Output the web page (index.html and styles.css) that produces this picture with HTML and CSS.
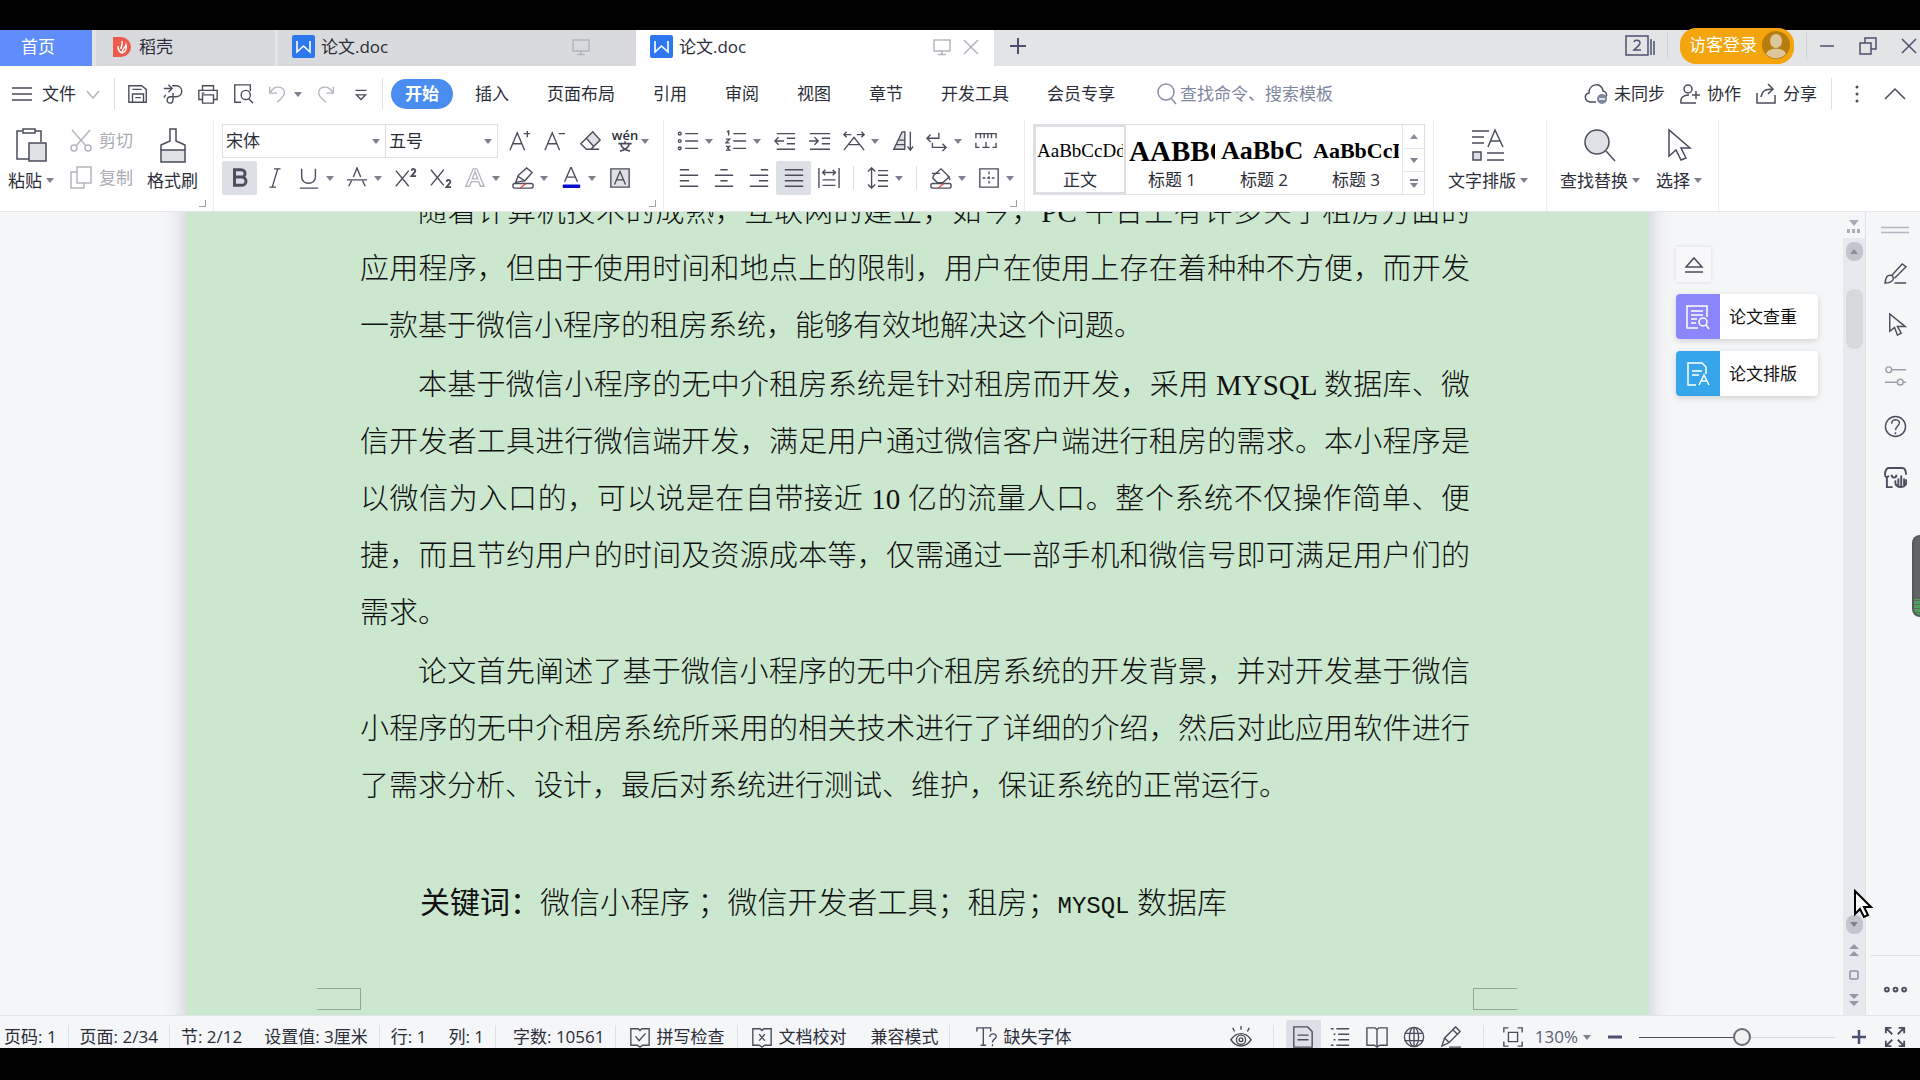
FILE: index.html
```html
<!DOCTYPE html>
<html lang="zh-CN">
<head>
    <meta charset="UTF-8" />
    <meta name="viewport" content="width=device-width, initial-scale=1" />
    <title>论文.doc</title>
    <link rel="stylesheet" href="styles.css">
</head>
<body>

    <header class="tabs">
        <button class="tab tab-home">首页</button>
        <button class="tab tab-store">
            <svg width="18" height="20" viewBox="0 0 18 20"><path d="M0 0h8a10 10 0 0 1 0 20H0z" fill="#ee5b4c"/><path d="M9 4c1 3-1 5-1 8m-3-3c0 4 1 6 4 7 3-1 5-4 4-8-1 3-3 3-4 7" fill="none" stroke="#fff" stroke-width="1.5"/></svg>
            <span>稻壳</span>
        </button>
        <button class="tab tab-doc">
            <svg width="23" height="23" viewBox="0 0 23 23"><rect width="23" height="23" rx="2" fill="#2e78ef"/><path d="M5 6v11l6.500-6 6.500 6V6" fill="none" stroke="#fff" stroke-width="1.600"/></svg>
            <span>论文.doc</span>
            <svg class="line faint push" width="18" height="18" viewBox="0 0 18 18"><path d="M1 2h16v11H1zM9 13v3M5 16.500h8"/></svg>
        </button>
        <div class="tab tab-doc active">
            <svg width="23" height="23" viewBox="0 0 23 23"><rect width="23" height="23" rx="2" fill="#2e78ef"/><path d="M5 6v11l6.500-6 6.500 6V6" fill="none" stroke="#fff" stroke-width="1.600"/></svg>
            <span>论文.doc</span>
            <svg class="line faint push" width="18" height="18" viewBox="0 0 18 18"><path d="M1 2h16v11H1zM9 13v3M5 16.500h8"/></svg>
            <button class="close" aria-label="关闭"><svg class="line faint" width="16" height="16" viewBox="0 0 16 16"><path d="M1 1l14 14M15 1L1 15"/></svg></button>
        </div>
        <button class="new-tab" aria-label="新建"><svg class="line blue" width="18" height="18" viewBox="0 0 18 18"><path d="M9 1v16M1 9h16" stroke-width="2"/></svg></button>
        <div class="window-tools">
            <button aria-label="窗口 2"><svg class="line blue" width="30" height="22" viewBox="0 0 30 22"><path d="M1 1h22v19H1zM26 4v16M29 6v14"/><path d="M9 7c1-3 6-2 6 1 0 2-3 4-6 7h7"/></svg></button>
            <i class="sep"></i>
            <button class="login">访客登录
                <svg width="28" height="28" viewBox="0 0 28 28"><circle cx="14" cy="14" r="14" fill="#b67c0d"/><ellipse cx="14" cy="10" rx="6" ry="7" fill="#dcc49b"/><path d="M4 23c2-7 18-7 20 0a14 14 0 0 1-20 0z" fill="#dcc49b"/></svg>
            </button>
            <i class="sep"></i>
            <button aria-label="最小化"><svg class="line blue" width="16" height="18" viewBox="0 0 16 18"><path d="M1 9h14"/></svg></button>
            <button aria-label="还原"><svg class="line blue" width="18" height="18" viewBox="0 0 18 18"><path d="M1 6h11v11H1zM6 6V1h11v11h-5"/></svg></button>
            <button aria-label="关闭窗口"><svg class="line blue" width="16" height="16" viewBox="0 0 16 16"><path d="M1 1l14 14M15 1L1 15"/></svg></button>
        </div>
    </header>

    <nav class="menu">
        <button class="file">
            <svg class="line" width="20" height="16" viewBox="0 0 20 16"><path d="M0 2h20M0 8h20M0 14h20"/></svg>
            文件
            <svg class="line faint" width="14" height="9" viewBox="0 0 14 9"><path d="M1 1l6 7 6-7"/></svg>
        </button>
        <i class="sep"></i>
        <div class="quick">
            <button class="tool" aria-label="保存"><svg class="line" viewBox="0 0 24 24"><path d="M2 21V3h14l5 4v14zM6 7h10M6 21v-9h12v9M9 16h6"/></svg></button>
            <button class="tool" aria-label="输出为PDF"><svg class="line" viewBox="0 0 24 24"><path d="M2 6h8M7 2l4 4-4 4M11 3h5c8 1 7 12-1 12H9c-4 0-5 7 0 7 4 0 3-6 3-11M4 13l-2 3"/></svg></button>
            <button class="tool" aria-label="打印"><svg class="line" viewBox="0 0 24 24"><path d="M6 8V3h12v5M6 18H2V8h20v10h-4M6 13h12v9H6zM5 11h3"/></svg></button>
            <button class="tool" aria-label="打印预览"><svg class="line" viewBox="0 0 24 24"><path d="M10 21H3V2h17v7M18 17l5 5"/><circle cx="15" cy="13" r="5"/></svg></button>
            <button class="tool drop" aria-label="撤销"><svg class="line faint" viewBox="0 0 24 24"><path d="M4 4v7h8M5 10c4-8 15-7 15 1 0 4-4 7-8 10"/></svg><i class="caret"></i></button>
            <button class="tool" aria-label="恢复"><svg class="line faint" viewBox="0 0 24 24"><path d="M20 4v7h-8M19 10C15 2 4 3 4 11c0 4 4 7 8 10"/></svg></button>
            <button class="tool" aria-label="更多"><svg class="line" viewBox="0 0 24 24"><path d="M6 8h12M7 13h10l-5 5z"/></svg></button>
        </div>
        <i class="sep"></i>
        <div class="menu-tabs">
            <button class="current">开始</button>
            <button>插入</button>
            <button>页面布局</button>
            <button>引用</button>
            <button>审阅</button>
            <button>视图</button>
            <button>章节</button>
            <button>开发工具</button>
            <button>会员专享</button>
        </div>
        <label class="search">
            <svg class="line pale" width="22" height="22" viewBox="0 0 22 22"><circle cx="10" cy="9" r="8"/><path d="M15 15l5 6"/></svg>
            <input type="text" placeholder="查找命令、搜索模板" aria-label="查找命令、搜索模板">
        </label>
        <div class="share">
            <button><svg class="line" width="24" height="22" viewBox="0 0 24 22"><path d="M12 19H6C0 18 0 11 5 10 5 0 18-1 19 8c4 1 4 4 3 6"/><circle cx="18" cy="16" r="5" fill="#7f86a0" stroke="none"/><path d="M15 16h6" stroke="#fff"/></svg>未同步</button>
            <button><svg class="line" width="22" height="22" viewBox="0 0 22 22"><circle cx="9" cy="6" r="4"/><path d="M13 20H2c-1-6 3-8 8-8M17 8v8M13 12h8M12 20h5"/></svg>协作</button>
            <button><svg class="line" width="22" height="22" viewBox="0 0 22 22"><path d="M2 10v10h18v-8M6 14c1-6 4-8 12-8M13 1l5 5-5 5"/></svg>分享</button>
            <i class="sep"></i>
            <button aria-label="更多选项"><svg width="6" height="20" viewBox="0 0 6 20" fill="#4a4d5c"><circle cx="3" cy="3" r="1.500"/><circle cx="3" cy="10" r="1.500"/><circle cx="3" cy="17" r="1.500"/></svg></button>
            <button aria-label="收起功能区"><svg class="line" width="22" height="14" viewBox="0 0 22 14"><path d="M1 12L11 2l10 10"/></svg></button>
        </div>
    </nav>

    <section class="ribbon">
        <div class="group clipboard">
            <button class="big">
                <svg class="line" viewBox="0 0 32 36"><path d="M7 4H2v28h12M20 4h6v11M8 2h12v4H8z"/><path d="M14 16h17v18H14z" fill="#dfe1e5"/></svg>
                <span>粘贴<i class="caret"></i></span>
            </button>
            <div class="rows">
                <button class="small"><svg class="line faint" viewBox="0 0 24 24"><path d="M3 1l14 16M21 1L7 17"/><circle cx="5" cy="19" r="3"/><circle cx="19" cy="19" r="3"/></svg>剪切</button>
                <button class="small"><svg class="line faint" viewBox="0 0 24 24"><path d="M8 1h14v16H8zM8 6H2v16h13v-5"/></svg>复制</button>
            </div>
            <button class="big">
                <svg class="line" viewBox="0 0 32 36"><path d="M4 23h24v12H4z" fill="#dfe1e5"/><path d="M4 23v-5l9-4V2h6v12l9 4v5"/></svg>
                <span>格式刷</span>
            </button>
            <i class="corner"></i>
        </div>

        <div class="group font">
            <div class="row">
                <div class="selects">
                    <div class="select-box font-name"><select aria-label="字体"><option>宋体</option></select><i class="caret"></i></div>
                    <div class="select-box font-size"><select aria-label="字号"><option>五号</option></select><i class="caret"></i></div>
                </div>
                <button class="tool" aria-label="增大字号"><svg class="line" viewBox="0 0 24 24"><path d="M1 22L9 3l8 19M4 15h10M20 1v7M16 4h7"/></svg></button>
                <button class="tool" aria-label="减小字号"><svg class="line" viewBox="0 0 24 24"><path d="M1 22L9 3l8 19M4 15h10M16 4h7"/></svg></button>
                <button class="tool" aria-label="清除格式"><svg class="line" viewBox="0 0 24 24"><path d="M8 9l7-7 8 9-7 7z" fill="#dfe1e5"/><path d="M8 9l-6 6 6 6h5l3-3M8 21h14"/></svg></button>
                <button class="tool drop phonetic" aria-label="拼音指南"><span class="pinyin">wén</span><svg class="line thick" viewBox="0 0 24 14"><path d="M12 0v3M4 3h16M7 4c2 6 7 7 11 8M17 4c-2 6-7 7-11 8"/></svg><i class="caret"></i></button>
            </div>
            <div class="row">
                <button class="tool on" aria-label="加粗"><svg class="line" viewBox="0 0 24 24"><path d="M6 3h7c6 0 6 8 0 8H6zM6 11h8c6 0 6 9 0 9H6z" stroke-width="3.200"/></svg></button>
                <button class="tool" aria-label="倾斜"><svg class="line" viewBox="0 0 24 24"><path d="M11 2h7M6 22h7M15 2L9 22"/></svg></button>
                <button class="tool drop" aria-label="下划线"><svg class="line" viewBox="0 0 24 24"><path d="M4 2v9c0 9 15 9 15 0V2M2 23h20"/></svg><i class="caret"></i></button>
                <button class="tool drop" aria-label="删除线"><svg class="line" viewBox="0 0 24 24"><path d="M3 21l3-6M8 11l4-10 4 10M18 15l3 6M1 14h22"/></svg><i class="caret"></i></button>
                <button class="tool" aria-label="上标"><svg class="line" viewBox="0 0 24 24"><path d="M1 4l14 17M15 4L1 21"/><path d="M18 4c1-3 5-2 4 1l-4 5h5" stroke-width="2"/></svg></button>
                <button class="tool" aria-label="下标"><svg class="line" viewBox="0 0 24 24"><path d="M1 3l14 17M15 3L1 20"/><path d="M18 16c1-3 5-2 4 1l-4 5h5" stroke-width="2"/></svg></button>
                <button class="tool drop" aria-label="文字效果"><svg class="line faint" viewBox="0 0 24 24"><path d="M2 21L10 2h4l8 19h-4l-2-5H8l-2 5zM9 13h6l-3-8z"/></svg><i class="caret"></i></button>
                <button class="tool drop" aria-label="突出显示"><svg class="line" viewBox="0 0 24 24"><path d="M7 9l9-8 6 5-8 9-6 1-4 1z"/><path d="M6 10l8 5" /><rect x="1" y="18" width="22" height="5" rx="2"/><path d="M9 23l6-5" stroke="#e04848"/></svg><i class="caret"></i></button>
                <button class="tool drop" aria-label="字体颜色"><svg class="line" viewBox="0 0 24 24"><path d="M5 16l7-16 7 16M8 11h8"/><rect x="3" y="19" width="19" height="4" rx="1" fill="#0a0acb" stroke="none"/></svg><i class="caret"></i></button>
                <button class="tool" aria-label="字符底纹"><svg class="line" viewBox="0 0 24 24"><path d="M2 2h20v20H2z" fill="#dfe1e5"/><path d="M6 19l6-14 6 14M8 14h8"/></svg></button>
            </div>
            <i class="corner"></i>
        </div>

        <div class="group para">
            <div class="row">
                <button class="tool drop" aria-label="项目符号"><svg class="line" viewBox="0 0 24 24"><circle cx="3" cy="4" r="1.500"/><circle cx="3" cy="12" r="1.500"/><circle cx="3" cy="20" r="1.500"/><path d="M9 4h14M9 12h14M9 20h14"/></svg><i class="caret"></i></button>
                <button class="tool drop" aria-label="编号"><svg class="line" viewBox="0 0 24 24"><path d="M2 2l2-1v5M1 10h4l-4 4h4M1 18h4l-2 2 2 2H1M9 4h14M9 12h14M9 20h14"/></svg><i class="caret"></i></button>
                <button class="tool" aria-label="减少缩进"><svg class="line" viewBox="0 0 24 24"><path d="M3 4h20M14 9h9M14 15h9M3 21h20M1 12h10M5 8l-4 4 4 4"/></svg></button>
                <button class="tool" aria-label="增加缩进"><svg class="line" viewBox="0 0 24 24"><path d="M1 4h22M14 9h9M14 15h9M1 21h22M0 12h10M6 8l4 4-4 4"/></svg></button>
                <button class="tool drop" aria-label="中文版式"><svg class="line" viewBox="0 0 24 24"><path d="M1 22L12 8l11 14M6 16h12M1 5h8M4 2L1 5l3 3M15 5h8M20 2l3 3-3 3"/></svg><i class="caret"></i></button>
                <button class="tool" aria-label="排序"><svg class="line" viewBox="0 0 24 24"><path d="M2 21l9-19h3v19zM7 11h7M5 16h9" fill="#dfe1e5"/><path d="M20 2v20M17 18l3 4 3-4"/></svg></button>
                <button class="tool drop" aria-label="显示编辑标记"><svg class="line" viewBox="0 0 24 24"><path d="M14 3v6H1M5 5L1 9l4 4M7 14v5h15M18 15l4 4-4 4"/></svg><i class="caret"></i></button>
                <button class="tool" aria-label="制表位"><svg class="line" viewBox="0 0 24 24"><path d="M1 9V4h22v5M6 4v5M10 4v5M14 4v5M18 4v5M1 14v5h4M23 14v5h-4M12 13v6M8 19h8"/></svg></button>
            </div>
            <div class="row">
                <button class="tool" aria-label="左对齐"><svg class="line" viewBox="0 0 24 24"><path d="M2 3h10M2 9h20M2 15h10M2 21h20"/></svg></button>
                <button class="tool" aria-label="居中"><svg class="line" viewBox="0 0 24 24"><path d="M8 3h8M2 9h20M8 15h8M2 21h20"/></svg></button>
                <button class="tool" aria-label="右对齐"><svg class="line" viewBox="0 0 24 24"><path d="M14 3h8M2 9h20M12 15h10M2 21h20"/></svg></button>
                <button class="tool on" aria-label="两端对齐"><svg class="line" viewBox="0 0 24 24"><path d="M2 3h20M2 9h20M2 15h20M2 21h20"/></svg></button>
                <button class="tool" aria-label="分散对齐"><svg class="line" viewBox="0 0 24 24"><path d="M1 1v22M23 1v22M5 6h14M8 3L5 6l3 3M16 3l3 3-3 3M5 14h14M5 20h14"/></svg></button>
                <i class="sep"></i>
                <button class="tool drop" aria-label="行距"><svg class="line" viewBox="0 0 24 24"><path d="M5 1v22M1 5l4-4 4 4M1 19l4 4 4-4M12 4h11M12 9h11M12 15h11M12 21h11"/></svg><i class="caret"></i></button>
                <i class="sep"></i>
                <button class="tool drop" aria-label="底纹颜色"><svg class="line" viewBox="0 0 24 24"><path d="M4 9l8-7 9 9-7 6H8l-5-5zM2 7h9M19 9l3 5" fill="none"/><rect x="1" y="18" width="22" height="5" rx="2"/><path d="M9 23l6-5" stroke="#e04848"/></svg><i class="caret"></i></button>
                <button class="tool drop" aria-label="边框"><svg class="line" viewBox="0 0 24 24"><path d="M2 2h20v20H2z"/><path d="M12 5v14M5 12h14" stroke-dasharray="3 2"/></svg><i class="caret"></i></button>
            </div>
            <i class="corner"></i>
        </div>

        <div class="group styles">
            <div class="gallery">
                <button class="style picked"><b class="normal">AaBbCcDd</b><span>正文</span></button>
                <button class="style"><b class="h1">AABBC</b><span>标题 1</span></button>
                <button class="style"><b class="h2">AaBbC</b><span>标题 2</span></button>
                <button class="style"><b class="h3">AaBbCcD</b><span>标题 3</span></button>
                <div class="gallery-nav">
                    <button aria-label="上一行"><i class="caret up"></i></button>
                    <button aria-label="下一行"><i class="caret"></i></button>
                    <button aria-label="展开样式"><i class="bar"></i><i class="caret"></i></button>
                </div>
            </div>
        </div>

        <div class="group typeset">
            <button class="big">
                <svg class="line" viewBox="0 0 32 36"><path d="M0 4h17M0 10h12M0 16h12M16 20l7-17 8 17M18 14h10M15 26h17M15 33h17"/><path d="M1 25h8v8H1z" fill="#dfe1e5"/></svg>
                <span>文字排版<i class="caret"></i></span>
            </button>
        </div>

        <div class="group find">
            <button class="big">
                <svg class="line" viewBox="0 0 32 36"><circle cx="13" cy="15" r="12" fill="#dfe1e5"/><path d="M22 24l9 10"/></svg>
                <span>查找替换<i class="caret"></i></span>
            </button>
            <button class="big">
                <svg class="line" viewBox="0 0 32 36"><path d="M6 3v26l7-6 5 10 5-2-5-10h9z"/></svg>
                <span>选择<i class="caret"></i></span>
            </button>
        </div>
    </section>

    <main class="work">
        <div class="canvas">
            <article class="page">
                <p>随着计算机技术的成熟，互联网的建立，如今，PC 平台上有许多关于租房方面的应用程序，但由于使用时间和地点上的限制，用户在使用上存在着种种不方便，而开发一款基于微信小程序的租房系统，能够有效地解决这个问题。</p>
                <p>本基于微信小程序的无中介租房系统是针对租房而开发，采用 MYSQL 数据库、微信开发者工具进行微信端开发，满足用户通过微信客户端进行租房的需求。本小程序是以微信为入口的，可以说是在自带接近 10 亿的流量人口。整个系统不仅操作简单、便捷，而且节约用户的时间及资源成本等，仅需通过一部手机和微信号即可满足用户们的需求。</p>
                <p>论文首先阐述了基于微信小程序的无中介租房系统的开发背景，并对开发基于微信小程序的无中介租房系统所采用的相关技术进行了详细的介绍，然后对此应用软件进行了需求分析、设计，最后对系统进行测试、维护，保证系统的正常运行。</p>
                <p class="keywords"><strong>关键词：</strong>微信小程序 ；微信开发者工具；租房；<code>MYSQL</code> 数据库</p>
                <div class="crops"><i></i><i></i></div>
            </article>

            <aside class="helpers">
                <button class="eject" aria-label="收起"><svg class="line" width="20" height="18" viewBox="0 0 20 18"><path d="M2 11l8-9 8 9zM1 16h18"/></svg></button>
                <button class="helper check">
                    <span class="badge"><svg class="line white" width="26" height="26" viewBox="0 0 26 26"><path d="M13 24H2V2h20v11M6 7h12M6 11h12M6 15h6M6 19h5M21 21l3 4"/><circle cx="18" cy="18" r="4"/></svg></span>
                    论文查重
                </button>
                <button class="helper layout">
                    <span class="badge"><svg class="line white" width="26" height="26" viewBox="0 0 26 26"><path d="M11 24H3V2h14l4 4v7M7 10h10M7 14h7M14 24l5-10 5 10M16 20h6"/></svg></span>
                    论文排版
                </button>
            </aside>
        </div>

        <div class="scroll">
            <svg class="ruler" width="16" height="14" viewBox="0 0 16 14" fill="#a9adb8"><path d="M3 0h10L8 6zM1 9h3v4H1zM6 9h3v4H6zM11 9h3v4h-3z"/></svg>
            <button class="arrow" aria-label="向上滚动"><i class="caret up"></i></button>
            <i class="thumb"></i>
            <div class="scroll-end">
                <button class="arrow" aria-label="向下滚动"><i class="caret"></i></button>
                <button aria-label="上一页"><svg width="12" height="14" viewBox="0 0 12 14" fill="#9498a6"><path d="M6 1l5 5H1zM6 8l5 5H1z"/></svg></button>
                <button aria-label="选择浏览对象"><svg class="line pale" width="12" height="12" viewBox="0 0 12 12"><rect x="2" y="2" width="8" height="8" rx="1"/></svg></button>
                <button aria-label="下一页"><svg width="12" height="14" viewBox="0 0 12 14" fill="#9498a6"><path d="M6 6l5-5H1zM6 13l5-5H1z"/></svg></button>
            </div>
        </div>

        <aside class="side">
            <svg class="line faint grip" width="30" height="8" viewBox="0 0 30 8"><path d="M1 1.500h28M1 6.500h28"/></svg>
            <button aria-label="样式"><svg class="line" viewBox="0 0 24 24"><path d="M1 22c1-6 2-9 7-8 4 3 1 8-7 8zM8 14L19 2l4 3-12 12M11 22h12"/></svg></button>
            <button aria-label="选择"><svg class="line" viewBox="0 0 24 24"><path d="M6 1v18l5-4 3 8 4-2-4-7h8z"/></svg></button>
            <button aria-label="属性"><svg class="line faint dim" viewBox="0 0 24 24"><circle cx="5" cy="6" r="3"/><path d="M8 6h15M1 19h13M20 19h3"/><circle cx="17" cy="19" r="3"/></svg></button>
            <button aria-label="帮助"><svg class="line" viewBox="0 0 24 24"><circle cx="12" cy="12" r="10.500"/><path d="M8 9c0-6 9-5 8 0-1 3-4 3-4 7M12 18v2"/></svg></button>
            <button aria-label="稻壳资源"><svg class="line thick" viewBox="0 0 24 24"><path d="M3 11v11h6M1 10c0-5 1-8 4-8h14c3 0 4 3 4 7M1 10c1 2 3 2 4 0M8 9c0 4 5 4 5 0"/><path d="M18 10v12M15 13v8M12 15c-1 5 2 7 6 7s6-3 5-8M21 13v8"/></svg></button>
            <button class="more" aria-label="更多"><svg class="line thick" viewBox="0 0 24 24"><circle cx="3" cy="12" r="2"/><circle cx="12" cy="12" r="2"/><circle cx="21" cy="12" r="2"/></svg></button>
        </aside>

        <div class="meter"></div>
        <svg class="pointer" width="20" height="30" viewBox="0 0 20 30"><path d="M2 2v23l5-5 4 8 4-2-4-8h7z" fill="#fff" stroke="#000" stroke-width="2"/></svg>
    </main>

    <footer class="status">
        <span>页码: 1</span>
        <i class="sep"></i>
        <span>页面: 2/34</span>
        <i class="sep"></i>
        <span class="pair"><span>节: 2/12</span><span>设置值: 3厘米</span></span>
        <i class="sep"></i>
        <span class="pair"><span>行: 1</span><span>列: 1</span></span>
        <i class="sep"></i>
        <span class="count">字数: 10561</span>
        <i class="sep"></i>
        <button><svg class="line" viewBox="0 0 24 24"><path d="M10 3H2v18h7l3 2 3-2h7V3h-8l-2 2zM7 11l4 5 7-8"/></svg>拼写检查</button>
        <i class="sep"></i>
        <span class="pair"><button><svg class="line" viewBox="0 0 24 24"><path d="M10 3H2v18h7l3 2 3-2h7V3h-8l-2 2zM9 9l6 7M15 9l-6 7"/></svg>文档校对</button><span>兼容模式</span></span>
        <i class="sep"></i>
        <button class="missing"><svg class="line" viewBox="0 0 24 24"><path d="M1 6V2h15v4M8 2v19M5 21h6M15 12c0-5 8-4 7 0-1 3-4 2-4 6M18 20v2"/></svg>缺失字体</button>

        <div class="views">
            <button class="tool" aria-label="护眼模式"><svg class="line" viewBox="0 0 24 24"><path d="M1 15c6-9 16-9 22 0-6 9-16 9-22 0zM12 0v4M3 2l2 4M21 2l-2 4"/><circle cx="12" cy="15" r="5"/><circle cx="12" cy="15" r="2"/></svg></button>
            <i class="sep"></i>
            <button class="tool on" aria-label="页面视图"><svg class="line" viewBox="0 0 24 24"><path d="M2 1h15l5 5v17H2zM6 10h12M6 15h12"/></svg></button>
            <button class="tool" aria-label="大纲"><svg class="line" viewBox="0 0 24 24"><path d="M2 3h3M8 3h14M5 9h2M10 9h12M5 15h2M10 15h12M2 21h3M8 21h14"/></svg></button>
            <button class="tool" aria-label="阅读版式"><svg class="line" viewBox="0 0 24 24"><path d="M12 4L10 2H1v19h8l3 2 3-2h8V2h-9zM12 4v19"/></svg></button>
            <button class="tool" aria-label="Web版式"><svg class="line" viewBox="0 0 24 24"><circle cx="12" cy="12" r="10.500"/><ellipse cx="12" cy="12" rx="5" ry="10.500"/><path d="M12 1v22M2 8h20M2 16h20"/></svg></button>
            <button class="tool" aria-label="写作模式"><svg class="line" viewBox="0 0 24 24"><path d="M2 22l3-9L17 1l5 5L10 18zM5 13l5 5M14 4l5 5M10 23h13"/></svg></button>
            <i class="sep"></i>
            <button class="tool" aria-label="适合页面"><svg class="line" viewBox="0 0 24 24"><path d="M7 2H2v5M17 2h5v5M7 22H2v-5M17 22h5v-5M7 7h10v10H7z"/></svg></button>
            <button class="percent">130%<i class="caret"></i></button>
            <button class="step" aria-label="缩小"><svg class="line blue" viewBox="0 0 16 16"><path d="M1 8h14" stroke-width="3"/></svg></button>
            <input class="zoom" type="range" min="0" max="100" value="53" aria-label="缩放">
            <button class="step" aria-label="放大"><svg class="line blue" viewBox="0 0 16 16"><path d="M1 8h14M8 1v14" stroke-width="2.500"/></svg></button>
            <button class="full" aria-label="全屏"><svg class="line thick" viewBox="0 0 24 24"><path d="M2 8V2h6M2 2l7 7M22 8V2h-6M22 2l-7 7M2 16v6h6M2 22l7-7M22 16v6h-6M22 22l-7-7"/></svg></button>
        </div>
    </footer>

</body>
</html>
```

FILE: styles.css
```css
* {
    box-sizing: border-box;
}

body {
    margin: 0;
    height: 100vh;
    padding: 30px 0 32px;
    display: flex;
    flex-direction: column;
    overflow: hidden;
    background-color: #000;
    color: #2b2d38;
    font-family: "Open Sans", "Noto Sans CJK SC", sans-serif;
    font-size: 17px;
    line-height: 24px;
}

button,
input,
select {
    font: inherit;
    color: inherit;
    margin: 0;
    padding: 0;
    border: none;
    background: none;
}

button {
    display: flex;
    align-items: center;
    white-space: nowrap;
}

svg {
    display: block;
    flex: none;
}

.line {
    fill: none;
    stroke: #4a4d5c;
    stroke-width: 1.5;
}

.line.thick { stroke-width: 2; }
.line.faint { stroke: #b4b6bf; }
.line.faint.dim { stroke: #9b9fa9; }
.line.pale { stroke: #8b90a5; }
.line.blue { stroke: #4b5070; }
.line.white { stroke: #fff; }

.sep {
    flex: none;
    width: 1px;
    background-color: #dfe0e4;
}

.caret {
    flex: none;
    display: inline-block;
    border: 4px solid transparent;
    border-top: 5px solid #7d818f;
    border-bottom: none;
}

.caret.up {
    border-top: none;
    border-bottom: 5px solid #8b8f9c;
}

/* tabs */
.tabs {
    flex: none;
    height: 36px;
    display: flex;
    background-color: #e3e4e6;
}

.tab {
    flex: none;
    display: flex;
    align-items: center;
    padding-bottom: 3px;
    background-color: #d9dadd;
}

.tab-home {
    width: 92px;
    margin-right: 4px;
    padding-left: 21px;
    background-color: #5f8dfb;
    color: #fff;
}

.tab-store {
    width: 179px;
    padding-left: 17px;
    gap: 8px;
    margin-right: 3px;
}

.tab-doc {
    width: 358px;
    padding-left: 14px;
    padding-right: 46px;
    gap: 6px;
}

.tab-doc.active {
    padding-right: 15px;
    background-color: #fff;
}

.push {
    margin-left: auto;
}

.close {
    margin-left: 6px;
}

.new-tab {
    padding: 0 15px 4px;
}

.window-tools {
    margin-left: auto;
    display: flex;
    align-items: center;
    gap: 12px;
    padding: 0 3px 4px 0;
}

.window-tools .sep {
    height: 26px;
    background-color: #cfd0d4;
}

.window-tools button + button {
    margin-left: 12px;
}

.window-tools .login {
    height: 36px;
    padding: 0 4px 2px 9px;
    gap: 5px;
    border-radius: 16px;
    background-color: #f4a50d;
    color: #fff;
}

/* menu */
.menu {
    flex: none;
    height: 54px;
    display: flex;
    align-items: center;
    padding: 2px 14px 0 12px;
    background-color: #fff;
}

.menu .sep {
    height: 32px;
}

.file {
    gap: 10px;
    margin-right: 14px;
}

.quick {
    display: flex;
    padding: 0 4px 0 5px;
}

.tool {
    flex: none;
    width: 35px;
    height: 34px;
    padding: 0 5px;
    justify-content: center;
}

.tool svg {
    width: 22px;
    height: 22px;
}

.tool.drop {
    width: 48px;
    padding: 0 6px;
    gap: 6px;
    justify-content: flex-start;
}

.tool.on {
    background-color: #dcdfe5;
    border-radius: 2px;
}

.menu-tabs {
    display: flex;
    align-items: center;
    gap: 38px;
    padding-left: 8px;
}

.menu-tabs .current {
    height: 30px;
    padding: 0 14px;
    margin-right: -16px;
    border-radius: 15px;
    background-color: #4a8df0;
    color: #fff;
    font-weight: bold;
}

.search {
    flex: 1;
    display: flex;
    align-items: center;
    gap: 2px;
    margin-left: 41px;
}

.search input {
    width: 220px;
    outline: none;
}

.search input::placeholder {
    color: #7f86a0;
    opacity: 1;
}

.share {
    display: flex;
    align-items: center;
    gap: 14px;
}

.share button {
    gap: 6px;
}

.share .sep + button {
    margin: 0 10px 0 8px;
}

/* ribbon */
.ribbon {
    flex: none;
    height: 92px;
    display: flex;
    background-color: #fff;
    border-bottom: 1px solid #e4e6e9;
}

.group {
    position: relative;
    flex: none;
    padding-top: 4px;
    border-right: 1px solid #ebecef;
}

.corner {
    position: absolute;
    right: 7px;
    bottom: 4px;
    width: 7px;
    height: 7px;
    border: solid #9da1ac;
    border-width: 0 1px 1px 0;
}

.clipboard {
    display: flex;
    padding-left: 3px;
    width: 214px;
}

.rows {
    display: flex;
    flex-direction: column;
    gap: 3px;
    margin: 0 9px 0 10px;
}

.small {
    height: 34px;
    gap: 6px;
    color: #a9abb5;
}

.small svg {
    width: 24px;
    height: 24px;
}

.big {
    flex-direction: column;
    height: 72px;
    padding: 3px 5px 0;
}

.big svg {
    width: 32px;
    height: 36px;
    margin-bottom: 6px;
}

.big .caret {
    margin: 0 0 4px 4px;
}

.row {
    display: flex;
    margin-bottom: 3px;
}

.font {
    padding-left: 8px;
    width: 450px;
}

.para {
    width: 361px;
    padding-left: 7px;
}

.selects {
    display: flex;
    width: 276px;
    height: 34px;
    margin-right: 4px;
    border: 1px solid #dddfe3;
}

.select-box {
    display: flex;
    align-items: center;
    padding-right: 5px;
}

.select-box select {
    appearance: none;
    flex: 1;
    height: 100%;
    padding-left: 3px;
}

.font-name {
    width: 163px;
    border-right: 1px solid #dddfe3;
}

.font-size {
    flex: 1;
}

/* letters over a small glyph, caret beside both */
.tool.phonetic {
    display: grid;
    grid-template-columns: 24px 8px;
    gap: 0 4px;
    align-content: center;
    justify-items: center;
}

.pinyin {
    font-size: 13px;
    line-height: 12px;
    font-weight: 600;
}

.phonetic svg {
    width: 20px;
    height: 12px;
    grid-row: 2;
}

.phonetic .caret {
    grid-area: 1 / 2 / 3 / 3;
    align-self: center;
}

.row .sep {
    height: 24px;
    margin: 5px 7px;
}

.styles {
    padding: 4px 8px;
}

.gallery {
    display: flex;
    height: 71px;
    border: 1px solid #dddfe3;
}

.style {
    width: 92px;
    flex-direction: column;
    align-items: stretch;
    justify-content: flex-end;
    padding: 0 1px;
    border: 2px solid transparent;
}

.style.picked {
    border-color: #dddfe5;
}

.style b {
    overflow: hidden;
    font-family: "Liberation Serif", serif;
    line-height: 34px;
    color: #000;
    text-align: left;
}

.style .normal { font-size: 19px; font-weight: normal; }
.style .h1 { font-size: 29px; }
.style .h2 { font-size: 26px; }
.style .h3 { font-size: 22px; }

.gallery-nav {
    width: 22px;
    display: grid;
    grid-template-rows: 1fr 1fr 1fr;
    border-left: 1px solid #e4e6e9;
}

.gallery-nav button {
    flex-direction: column;
    justify-content: center;
    gap: 2px;
}

.gallery-nav button + button {
    border-top: 1px solid #e4e6e9;
}

.bar {
    width: 8px;
    height: 2px;
    background-color: #7d818f;
}

.typeset {
    padding-left: 9px;
    padding-right: 13px;
}

.find {
    display: flex;
    gap: 6px;
    padding-left: 8px;
    padding-right: 11px;
}

/* document */
.work {
    flex: 1;
    min-height: 0;
    position: relative;
    display: flex;
    background-color: #f5f6f8;
}

.canvas {
    flex: 1;
    position: relative;
    overflow: hidden;
    padding: 0 194px 0 186px;
    border-bottom: 1px solid #e2e4e7;
}

.page {
    margin-top: -28px;
    min-height: 900px;
    padding: 0 179px 0 174px;
    background-color: #cbe8cf;
    box-shadow: 0 0 20px rgba(60, 60, 80, 0.25);
    color: #111;
    font-family: "Liberation Serif", "Noto Sans CJK SC", serif;
    font-size: 29px;
    font-weight: 300;
    line-height: 57px;
}

.page p {
    margin: 0 0 2px;
    text-indent: 2em;
    text-align: justify;
}

.page .keywords {
    margin-top: 59px;
    font-size: 30px;
}

.page code {
    font-family: "Liberation Mono", monospace;
    font-size: 24px;
}

.crops {
    display: flex;
    justify-content: space-between;
    margin: 53px -47px 0 -43px;
}

.crops i {
    width: 44px;
    height: 22px;
    border: solid #8fa893;
    border-width: 1px 1px 1px 0;
}

.crops i + i {
    border-width: 1px 0 1px 1px;
}

.helpers {
    position: absolute;
    top: 35px;
    right: 25px;
    width: 142px;
    display: grid;
    gap: 12px;
}

.eject {
    width: 35px;
    height: 35px;
    justify-content: center;
    background-color: #f8f8fa;
    box-shadow: 0 0 4px rgba(0, 0, 0, 0.12);
}

.helper {
    height: 45px;
    gap: 9px;
    overflow: hidden;
    border-radius: 4px;
    background-color: #fff;
    box-shadow: 0 2px 6px rgba(0, 0, 0, 0.15);
    color: #111;
}

.badge {
    width: 44px;
    height: 100%;
    display: grid;
    place-items: center;
}

.check .badge { background-color: #8c86fb; }
.layout .badge { background-color: #36a5ea; }

.scroll {
    width: 23px;
    display: flex;
    flex-direction: column;
    align-items: center;
    background: linear-gradient(#f5f6f8 26px, #e8e9ee 26px);
    border-right: 1px solid #dfe1e6;
}

.ruler {
    margin: 8px 0;
}

.arrow {
    width: 17px;
    height: 19px;
    justify-content: center;
    border-radius: 8px;
    background-color: #c3c5cd;
}

.thumb {
    width: 17px;
    height: 60px;
    margin-top: 28px;
    border-radius: 8px;
    background-color: #d8d9dd;
}

.scroll-end {
    margin-top: auto;
    padding-bottom: 9px;
    display: flex;
    flex-direction: column;
    align-items: center;
    gap: 12px;
}

.scroll-end .arrow + button {
    margin-top: -3px;
}

.side {
    width: 54px;
    display: flex;
    flex-direction: column;
    align-items: center;
    padding-left: 4px;
    border-bottom: 1px solid #e2e4e7;
}

.grip {
    margin: 14px 0;
}

.side button {
    height: 51px;
}

.side button svg {
    width: 23px;
    height: 23px;
}

.side .more {
    width: 100%;
    height: 60px;
    justify-content: center;
    margin-top: auto;
    padding-top: 8px;
    border-top: 1px solid #dfe1e5;
}

.meter {
    position: absolute;
    top: 323px;
    right: 0;
    width: 8px;
    height: 82px;
    border: solid #55575a;
    border-width: 2px 0 2px 2px;
    border-radius: 8px 0 0 8px;
    background: repeating-linear-gradient(transparent 0 3px, #626466 3px 4px), linear-gradient(#626466 62px, #4ba45a 62px);
}

.pointer {
    position: absolute;
    right: 47px;
    bottom: 97px;
}

/* status bar */
.status {
    flex: none;
    height: 32px;
    display: flex;
    align-items: center;
    gap: 11px;
    padding: 10px 14px 0 4px;
    overflow: hidden;
    background-color: #f5f6f8;
    white-space: nowrap;
}

.status .sep {
    height: 24px;
}

.status svg {
    width: 22px;
    height: 22px;
}

.status button {
    gap: 5px;
}

.status > button,
.pair button {
    padding: 0 2px;
}

.pair {
    display: flex;
    gap: 22px;
}

.count {
    margin-left: 6px;
}

.status .missing {
    margin-left: 13px;
}

.views {
    margin-left: auto;
    display: flex;
    align-items: center;
}

.views .sep {
    margin: 0 12px;
}

.views .tool {
    margin-right: 2px;
}

.views .percent {
    margin: 0 16px 0 2px;
    color: #5b5f70;
}

.status .step svg {
    width: 16px;
    height: 16px;
}

.zoom {
    appearance: none;
    width: 196px;
    height: 20px;
    margin: 0 16px;
    background: linear-gradient(90deg, #4a4d5c 50%, #d6d8dc 50%) no-repeat center / 100% 1px;
}

.zoom::-webkit-slider-thumb {
    appearance: none;
    width: 18px;
    height: 18px;
    border: 2px solid #6a6c75;
    border-radius: 50%;
    background-color: #f0f0f0;
}

.full {
    margin-left: 17px;
}
```
